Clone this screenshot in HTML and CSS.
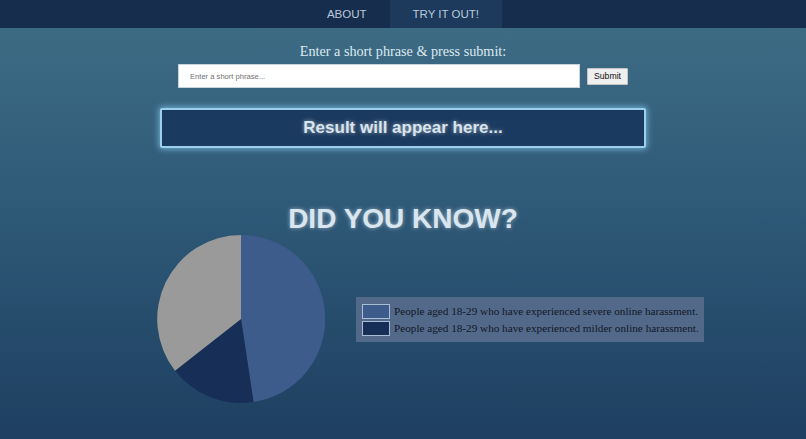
FILE: index.html
```html
<!DOCTYPE html>
<html lang="en">
<head>
<meta charset="utf-8">
<title>Try it out</title>
<link rel="stylesheet" href="styles.css">
</head>
<body>
<nav class="nav">
  <a class="nav-item" href="#">ABOUT</a>
  <a class="nav-item active" href="#">TRY IT OUT!</a>
</nav>
<main class="main">
  <h2 class="prompt">Enter a short phrase &amp; press submit:</h2>
  <form class="form" onsubmit="return false;">
    <input class="phrase" type="text" placeholder="Enter a short phrase...">
    <button class="submit" type="submit">Submit</button>
  </form>
  <div class="result">Result will appear here...</div>
  <h1 class="know">DID YOU KNOW?</h1>
  <div class="chart-row">
    <svg class="pie" width="168" height="168" viewBox="0 0 168 168">
      <path d="M84 84 L84 0 A84 84 0 0 1 96.5 167.1 Z" fill="#3d5b8b"/>
      <path d="M84 84 L96.5 167.1 A84 84 0 0 1 18.0 135.7 Z" fill="#172e56"/>
      <path d="M84 84 L18.0 135.7 A84 84 0 0 1 84 0 Z" fill="#9a9a9a"/>
    </svg>
    <div class="legend">
      <div class="legend-row"><span class="swatch severe"></span>People aged 18-29 who have experienced severe online harassment.</div>
      <div class="legend-row"><span class="swatch milder"></span>People aged 18-29 who have experienced milder online harassment.</div>
    </div>
  </div>
</main>
</body>
</html>
```
FILE: styles.css
```css
html, body {
  margin: 0;
  padding: 0;
}
body {
  min-height: 439px;
  background: linear-gradient(to bottom, #3f6e86 0px, #2f5a78 200px, #1e3f61 439px);
  font-family: "Liberation Sans", Arial, sans-serif;
}
.nav {
  height: 28px;
  background: #162d4e;
  display: flex;
  justify-content: center;
}
.nav-item {
  display: flex;
  align-items: center;
  padding: 0 23px;
  font-size: 11.5px;
  color: #b9c9dc;
  text-decoration: none;
}
.nav-item.active {
  background: #1d3a5c;
}
.main {
  display: flex;
  flex-direction: column;
  align-items: center;
}
.prompt {
  margin: 14px 0 4px;
  font-family: "Liberation Serif", "Times New Roman", serif;
  font-weight: normal;
  font-size: 14.2px;
  line-height: 18px;
  color: #dde9ef;
}
.form {
  display: flex;
  align-items: center;
  gap: 7px;
  margin: 0;
}
.phrase {
  box-sizing: border-box;
  width: 402px;
  height: 24px;
  border: 1px solid #c8d3da;
  padding: 0 11px;
  font-family: "Liberation Sans", Arial, sans-serif;
  font-size: 7.6px;
  background: #fff;
  outline: none;
}
.phrase::placeholder {
  color: #707070;
}
.submit {
  box-sizing: border-box;
  width: 41px;
  height: 17px;
  padding: 0;
  border: 1px solid #c4c4c4;
  border-radius: 1px;
  background: #efefef;
  font-family: "Liberation Sans", Arial, sans-serif;
  font-size: 8.7px;
  color: #111;
}
.result {
  box-sizing: border-box;
  margin-top: 20px;
  width: 486px;
  height: 40px;
  border: 2px solid #9bd0ec;
  border-radius: 2px;
  background: #1b3a5f;
  box-shadow: 0 0 6px 1px rgba(140, 205, 240, 0.75);
  display: flex;
  align-items: center;
  justify-content: center;
  font-weight: bold;
  font-size: 17px;
  color: #d8e4ee;
  text-shadow: 0 0 4px rgba(255, 255, 255, 0.55);
}
.know {
  margin: 55px 0 0;
  font-size: 28px;
  line-height: 32px;
  font-weight: bold;
  color: #d9e6ef;
  text-shadow: 0 0 4px rgba(255, 255, 255, 0.5);
}
.chart-row {
  align-self: stretch;
  display: flex;
  align-items: center;
  gap: 31px;
  padding-left: 157px;
}
.pie {
  display: block;
}
.legend {
  width: 348px;
  box-sizing: border-box;
  padding: 7px 6px 6px;
  background: #53698a;
  display: flex;
  flex-direction: column;
  gap: 2px;
  font-family: "Liberation Serif", "Times New Roman", serif;
  font-size: 11.2px;
  color: #111827;
}
.legend-row {
  display: flex;
  align-items: center;
  gap: 4px;
  white-space: nowrap;
  height: 15px;
}
.swatch {
  box-sizing: border-box;
  width: 28px;
  height: 15px;
  border: 1px solid #aabdd7;
  flex: none;
}
.swatch.severe {
  background: #3d5b8b;
}
.swatch.milder {
  background: #172e56;
}
```
